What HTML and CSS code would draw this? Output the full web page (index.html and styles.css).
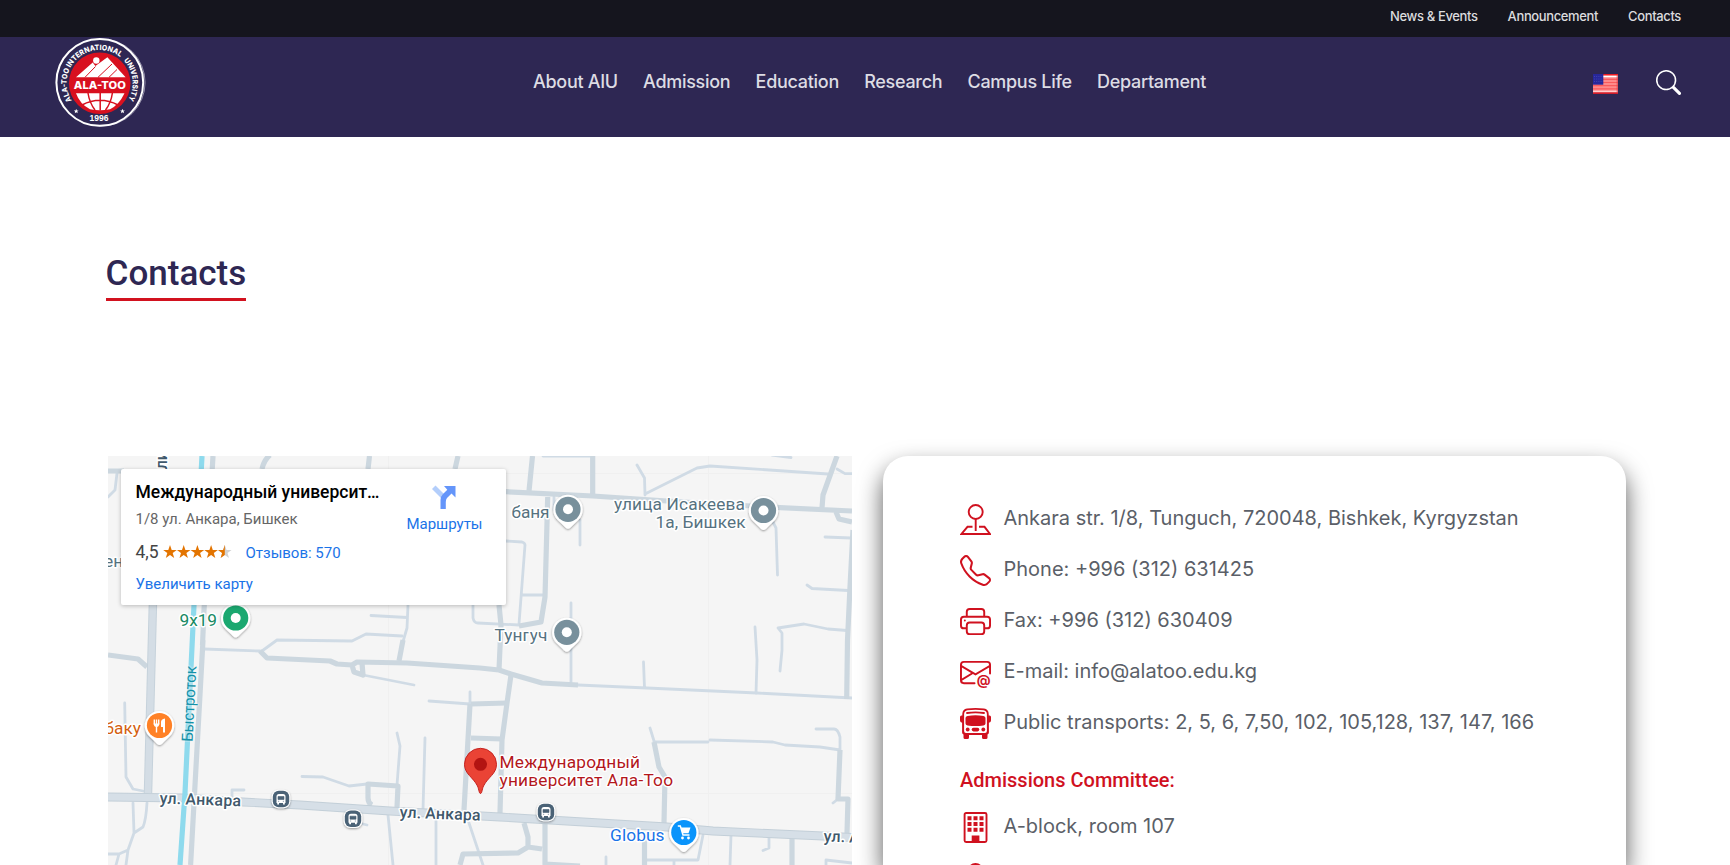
FILE: index.html
```html
<!DOCTYPE html>
<html lang="en">
<head>
<meta charset="utf-8">
<title>Contacts</title>
<link rel="stylesheet" href="styles.css">
</head>
<body>
<div class="topbar">
  <a class="top-news">News &amp; Events</a>
  <a class="top-ann">Announcement</a>
  <a class="top-con">Contacts</a>
</div>
<header class="header">
  <svg class="logo" viewBox="54 37 94 92">
    <defs>
      <path id="arcLeft" d="M71.700 100.500A33 33 0 0 1 120.500 57.400"/>
      <path id="arcRight" d="M123.800 60.500A33 33 0 0 1 127.700 100.500"/>
    </defs>
    <circle cx="101.500" cy="82.500" r="43.600" class="ring-ghost"/>
    <circle cx="99.800" cy="82.400" r="43.400" class="ring"/>
    <circle cx="99.700" cy="83.200" r="30.800" fill="#d8101f"/>
    <circle cx="96.300" cy="60.500" r="3.200" fill="#fff"/>
    <path d="M76 77.300L92.700 62.600L95.400 66L107.400 57.300L125.600 77.300Z" fill="#fff"/>
    <path d="M85 77.300L95.500 66.500M98 77.300L112 64M109 77.300L117 69.500" stroke="#d8101f" stroke-width="1" fill="none"/>
    <text x="73.800" y="89" class="logo-name" textLength="52" lengthAdjust="spacingAndGlyphs">ALA-TOO</text>
    <path d="M76 93.300H124.500Q119 105 110 109.200Q100 111.500 90 109.200Q80 104.500 76 93.300Z" fill="#fff"/>
    <path d="M100.200 93V110.500M88 93Q89.500 103 95 110M112.400 93Q111 103 105.500 110M82 105Q100 95.500 118 105" stroke="#d8101f" stroke-width="1.500" fill="none"/>
    <text class="logo-arc"><textPath href="#arcLeft" textLength="92" lengthAdjust="spacingAndGlyphs">ALA-TOO INTERNATIONAL</textPath></text>
    <text class="logo-arc"><textPath href="#arcRight" textLength="42" lengthAdjust="spacingAndGlyphs">UNIVERSITY</textPath></text>
    <text x="89.500" y="121.300" class="logo-year" textLength="19" lengthAdjust="spacingAndGlyphs">1996</text>
    <path d="M76.200 108.800l.7 1.600 1.700.1-1.300 1.100.4 1.600-1.500-.9-1.400.9.3-1.600-1.300-1.100 1.700-.1zM122.500 108.800l.7 1.600 1.700.1-1.300 1.100.4 1.600-1.500-.9-1.400.9.3-1.600-1.300-1.100 1.700-.1z" fill="#fff"/>
  </svg>
  <nav class="nav">
    <a>About AIU</a><a>Admission</a><a>Education</a><a>Research</a><a>Campus Life</a><a>Departament</a>
  </nav>
  <div class="tools">
    <svg class="flag" viewBox="0 0 25 20">
      <rect width="25" height="20" fill="#ff8a8a"/>
      <path d="M0 .7H25" stroke="#ee1c22" stroke-width="1.500"/>
      <path d="M0 2.500H25" stroke="#fff" stroke-width="1.500"/>
      <path d="M0 5.300H25M0 8.500H25M0 11.700H25M0 14.800H25" stroke="#fb5a5c" stroke-width="1.200"/>
      <path d="M0 17.300H25" stroke="#ffd9d9" stroke-width="1.200"/>
      <path d="M0 19.200H25" stroke="#cf1d2b" stroke-width="1.600"/>
      <path d="M24.300 1V19" stroke="#d73a48" stroke-opacity=".6" stroke-width="1.400"/>
      <rect width="10.300" height="10.700" fill="#27279b"/>
      <path d="M1 2.500H10M1 5H10M1 7.500H10" stroke="#4a4ab4" stroke-width=".8" stroke-dasharray="1 1.200"/>
    </svg>
    <svg class="search" viewBox="0 0 16 16" fill="#fff"><path d="M11.742 10.344a6.500 6.500 0 1 0-1.397 1.398h-.001q.044.06.098.115l3.850 3.850a1 1 0 0 0 1.415-1.414l-3.850-3.850a1 1 0 0 0-.115-.1zM12 6.500a5.500 5.500 0 1 1-11 0 5.500 5.500 0 0 1 11 0"/></svg>
  </div>
</header>
<main class="main">
  <h1 class="title">Contacts</h1>
  <div class="columns">
    <section class="map">
      <svg class="map-canvas" viewBox="108 456 744 409">
        <defs>
          <filter id="sh" x="-30%" y="-30%" width="160%" height="170%"><feDropShadow dx="0" dy="1" stdDeviation="1.200" flood-opacity=".4"/></filter>
          <g id="pin">
            <path d="M0 19.500C-1.500 19.500-3 18-4 16.800L-10.500 10.500A14.700 14.700 0 1 1 10.500 10.500L4 16.800C3 18 1.500 19.500 0 19.500Z" fill="#fff" filter="url(#sh)"/>
            <circle r="12.600"/>
          </g>
          <g id="bus">
            <rect x="-9.300" y="-9.300" width="18.600" height="18.600" rx="7" fill="#fff" filter="url(#sh)"/>
            <rect x="-8.200" y="-8.200" width="16.400" height="16.400" rx="6" fill="#4a6276"/>
            <path d="M-4.500 4V-2.500Q-4.500-5-2-5H2Q4.500-5 4.500-2.500V4H3.800V5.500H2V4H-2V5.500H-3.800V4Z" fill="#fff"/>
            <path d="M-3-2.500H3V.5H-3ZM-3 2.300H-1.800M1.800 2.300H3" fill="#4a6276" stroke="#4a6276" stroke-width=".6"/>
          </g>
        </defs>
        <rect x="108" y="456" width="744" height="409" fill="#f5f5f5"/>
        <path d="M388.500 456V865M708.500 456V865M108 473.500H852M108 793.500H852" stroke="#f0f0f0" fill="none"/>
        <g class="road-thin">
          <path d="M117 473L115 490L108 497"/>
          <path d="M637 465L644.500 478L645 495M645 494L697 468L710 466L828 474M837 469L845 473.600H852M772 455L791 457.500M543 456H593"/>
          <path d="M825 537L851 538M807 585L812 588.500L848 590.500M755 627L757 660L756 693"/>
          <path d="M847 630.500L828 629L804 624L778 628L782 633L782 650L780 671"/>
          <path d="M519 624L525 545Q525 543 522 542L506 541M523 595H543M580 520V545M554 497V510M773 522L776 528L777.500 575M571 603V682"/>
          <path d="M473 605V618Q474 623 478 623L519 625M408 605L407 628L402 645M371 615.500L407 617.500"/>
          <path d="M262 651L277 640L352 641L366 634L402 636M204 649L260 651M363 675L414 685"/>
          <path d="M124.700 703L126 777L133 789L143 791M133 803L134 833L128 850L126 865M147 803Q146 820 143 827L134 833M108 854H119L128 850M119 854L116 865"/>
          <path d="M232 797V790H244M302 776.500L323 777L349 786L367 784M397 785L400 746L397 733M425 738L423 810M429 701L470 704V692M363 824L367 825"/>
          <path d="M578 685L647 688L757 693L852 698M643.500 662L644.500 688M650 728L654 741"/>
          <path d="M654 742H708M710 740L773 742L785 745L820 747L840 750V737Q838 729 834 729H816M833 803L838 799"/>
          <path d="M647 860H698L703 835M674 861V865M731 835L730 865M769 837V848L763 850.500M826 865V860L852 863M606 857V865M388 815L393 865M436 820V865M468 820L483 865"/>
        </g>
        <g class="road">
          <path d="M108 471H124M262 469Q264 460 270 455M369.500 456L368 469M458 456L455 469M532.500 456L529 491M592.700 456V495"/>
          <path d="M506 491.700L593 496L667 501L780 507.700L852 511M837 456L823 495L822 508M836 512L839 519L852 522"/>
          <path d="M853 530L850 587L847.500 640L846.700 699"/>
          <path d="M547.700 497L545 597L541 622L519 626M499 605L501 625L499 670M403 640L399 661"/>
          <path d="M260 651L267 658L330 661L337 664L352 665L357 662L407 663L480 668L499 670L511 674L542 683L578 685M352 665L354 672L363 675L362 663"/>
          <path d="M108 655L138 659L147 667"/>
          <path d="M372 805Q368 803 368 798V784L398 786L397 807M470 704L464 810M471 704L507 703M471 738L502 739"/>
          <path d="M511 675L507 703L502 740L500 813M654 742L659 767L665 777L664 823M840 750L838 799H848L847 833"/>
          <path d="M524 823L528 837V847L542 849M528 847L518 853L463 854L460 865M545 823V864L580 866M644.500 840V865M792 839V865M203 640L190.600 865M213 456L204 610L202.500 645"/>
        </g>
        <path d="M153 600L148 793" stroke="#c6d2db" stroke-width="8.500" fill="none"/>
        <path d="M153 600L148 793" stroke="#d4dde5" stroke-width="6.500" fill="none"/>
        <path d="M108 797L183 798L243 802L300 805L390 811L500 817L667 827L713 831L823 836L852 837.500" stroke="#c3cfd8" stroke-width="8.800" fill="none"/>
        <path d="M108 797L183 798L243 802L300 805L390 811L500 817L667 827L713 831L823 836L852 837.500" stroke="#d6dfe7" stroke-width="7" fill="none"/>
        <path d="M202 456L194 605L185 793L180 865" stroke="#8edaed" stroke-width="5.200" fill="none"/>

        <g class="poi">
          <text x="511.500" y="517.500" textLength="38" class="slate">баня</text>
          <text x="614" y="510" textLength="131" class="slate">улица Исакеева</text>
          <text x="655.500" y="527.700" textLength="90" class="slate">1а, Бишкек</text>
          <text x="494.500" y="640.700" textLength="53" class="slate">Тунгуч</text>
          <text x="104" y="566.500" class="slate">ен</text>
          <text x="179.500" y="625.700" textLength="37.500" fill="#198a64">9x19</text>
          <text x="104.500" y="734" textLength="36.500" fill="#d45f10">баку</text>
          <text x="499.500" y="768" textLength="140.500" fill="#b3171c">Международный</text>
          <text x="499.500" y="785.700" textLength="173.500" fill="#b3171c">университет Ала-Тоо</text>
          <text x="610" y="840.500" textLength="54.500" fill="#1a73e8">Globus</text>
          <text class="water" transform="translate(192.500 742) rotate(-87)" textLength="76">Быстроток</text>
          <g class="street">
            <text transform="translate(159.500 803.500) rotate(2)" textLength="81.500">ул. Анкара</text>
            <text transform="translate(399.500 817.500) rotate(2.200)" textLength="81">ул. Анкара</text>
            <text transform="translate(823.500 841.500) rotate(2)" textLength="81">ул. Анкара</text>
            <text transform="translate(166.500 478.500) rotate(-90)">или</text>
          </g>
        </g>

        <use href="#pin" x="568" y="509.300" fill="#78909c"/><circle cx="568" cy="509.300" r="5" fill="#fff"/>
        <use href="#pin" x="763.500" y="510.500" fill="#78909c"/><circle cx="763.500" cy="510.500" r="5" fill="#fff"/>
        <use href="#pin" x="566.800" y="632.300" fill="#78909c"/><circle cx="566.800" cy="632.300" r="5" fill="#fff"/>
        <use href="#pin" x="235.700" y="618" fill="#1ba870"/><circle cx="235.700" cy="618" r="5" fill="#fff"/>
        <use href="#pin" x="159.500" y="725.500" fill="#ff8126"/>
        <path d="M154.300 719.500V724.500M156.500 719.500V724.500M158.700 719.500V724.500M156.500 724V732.500" stroke="#fff" stroke-width="1.400"/>
        <path d="M153.600 723.500H159.400Q159 727 156.500 727Q154 727 153.600 723.500ZM161 727V722Q161 719 165 718.500V732.500H163V727Z" fill="#fff"/>
        <use href="#pin" x="683.800" y="832.500" fill="#0a94fb"/>
        <path d="M677.800 826H680.300L683 835H689.500" fill="none" stroke="#fff" stroke-width="1.500"/>
        <path d="M680.800 827.500H690.500L688.500 833.200H682.300Z" fill="#fff"/>
        <circle cx="682.500" cy="838" r="1.400" fill="#fff"/><circle cx="688.500" cy="838" r="1.400" fill="#fff"/>
        <use href="#bus" x="281" y="799"/><use href="#bus" x="353" y="818.700"/><use href="#bus" x="546" y="812"/>
        <path d="M480.500 793.500C479 793.500 479.200 790 477.500 786C473 777 464.500 774 464.500 764.300A16 16 0 0 1 496.500 764.300C496.500 774 488 777 483.500 786C481.800 790 482 793.500 480.500 793.500Z" fill="#ea4335" stroke="#c5221f"/>
        <circle cx="480.500" cy="764.300" r="6.500" fill="#b31412"/>
      </svg>
      <div class="place">
        <div class="place-info">
          <div class="place-name">Международный университ…</div>
          <div class="place-addr">1/8 ул. Анкара, Бишкек</div>
          <div class="rating"><span class="score">4,5</span>
            <svg class="stars" viewBox="0 0 69 14">
              <defs><path id="st" d="M7 0L8.700 5H13.800L9.700 8.100L11.200 13L7 10L2.800 13L4.300 8.100L.2 5H5.300Z"/><clipPath id="half"><rect width="7" height="14"/></clipPath></defs>
              <g fill="#e37400"><use href="#st"/><use href="#st" x="13.700"/><use href="#st" x="27.400"/><use href="#st" x="41.100"/></g>
              <g transform="translate(54.800)"><use href="#st" fill="#d2d2d2"/><use href="#st" fill="#e37400" clip-path="url(#half)"/></g>
            </svg>
            <a class="reviews">Отзывов: 570</a></div>
          <a class="enlarge">Увеличить карту</a>
        </div>
        <div class="directions">
          <svg class="dir-icon" viewBox="0 0 24 24"><path d="M0 4L3.500 .5L12 9L9.500 13.500Z" fill="#b3cefb"/><path d="M8.500 24V15Q8.500 11.500 11 9L15.300 4.800L12 1H23.500V12.500L19.500 8.500L15 13Q13.800 14.500 13.800 17V24Z" fill="#6495fa"/></svg>
          <a>Маршруты</a>
        </div>
      </div>
    </section>
    <section class="card">
      <div class="row">
        <svg class="ico" viewBox="0 0 31 31"><g fill="none" stroke="#d0111f" stroke-width="1.900"><circle cx="15.700" cy="8" r="7"/><path d="M15.700 15V27M12.500 22.800H7.500L1.500 30H30L24.500 22.800H19"/></g></svg>
        <span>Ankara str. 1/8, Tunguch, 720048, Bishkek, Kyrgyzstan</span>
      </div>
      <div class="row">
        <svg class="ico" viewBox="0 0 16 16"><path d="M3.654 1.328a.678.678 0 0 0-1.015-.063L1.605 2.300c-.483.484-.661 1.169-.45 1.770a17.600 17.600 0 0 0 4.168 6.608 17.600 17.600 0 0 0 6.608 4.168c.601.211 1.286.033 1.770-.45l1.034-1.034a.678.678 0 0 0-.063-1.015l-2.307-1.794a.68.68 0 0 0-.58-.122l-2.190.547a1.750 1.750 0 0 1-1.657-.459L5.482 8.062a1.750 1.750 0 0 1-.46-1.657l.548-2.190a.68.68 0 0 0-.122-.58zM1.884.511a1.745 1.745 0 0 1 2.612.163L6.290 2.980c.329.423.445.974.315 1.494l-.547 2.190a.68.68 0 0 0 .178.643l2.457 2.457a.68.68 0 0 0 .644.178l2.189-.547a1.750 1.750 0 0 1 1.494.315l2.306 1.794c.829.645.905 1.870.163 2.611l-1.034 1.034c-.74.74-1.846 1.065-2.877.702a18.600 18.600 0 0 1-7.010-4.420 18.600 18.600 0 0 1-4.420-7.009c-.362-1.030-.037-2.137.703-2.877z"/></svg>
        <span>Phone: +996 (312) 631425</span>
      </div>
      <div class="row">
        <svg class="ico" viewBox="0 0 16 16"><path d="M2.500 8a.5.5 0 1 0 0-1 .5.5 0 0 0 0 1"/><path d="M5 1a2 2 0 0 0-2 2v2H2a2 2 0 0 0-2 2v3a2 2 0 0 0 2 2h1v1a2 2 0 0 0 2 2h6a2 2 0 0 0 2-2v-1h1a2 2 0 0 0 2-2V7a2 2 0 0 0-2-2h-1V3a2 2 0 0 0-2-2zM4 3a1 1 0 0 1 1-1h6a1 1 0 0 1 1 1v2H4zm1 5a2 2 0 0 0-2 2v1H2a1 1 0 0 1-1-1V7a1 1 0 0 1 1-1h12a1 1 0 0 1 1 1v3a1 1 0 0 1-1 1h-1v-1a2 2 0 0 0-2-2zm7 2v3a1 1 0 0 1-1 1H5a1 1 0 0 1-1-1v-3a1 1 0 0 1 1-1h6a1 1 0 0 1 1 1"/></svg>
        <span>Fax: +996 (312) 630409</span>
      </div>
      <div class="row">
        <svg class="ico" viewBox="0 0 16 16"><path d="M2 2a2 2 0 0 0-2 2v8.010A2 2 0 0 0 2 14h5.500a.5.5 0 0 0 0-1H2a1 1 0 0 1-.966-.741l5.640-3.471L8 9.583l7-4.200V8.500a.5.5 0 0 0 1 0V4a2 2 0 0 0-2-2zm3.708 6.208L1 11.105V5.383zM1 4.217V4a1 1 0 0 1 1-1h12a1 1 0 0 1 1 1v.217l-7 4.200z"/><text x="8.700" y="14.600" class="at">@</text></svg>
        <span>E-mail: info@alatoo.edu.kg</span>
      </div>
      <div class="row">
        <svg class="ico" viewBox="0 0 31 31"><path fill-rule="evenodd" d="M7 .6Q15.500-.6 24 .6Q28.500 1.300 28.700 6V7.500H29.500Q31 7.500 31 9V12.500Q31 14.500 28.900 14.800V24.500Q28.900 26 27.500 26.500V29.500Q27.500 31 26 31H23.500Q22 31 22 29.500V27H9V29.500Q9 31 7.500 31H5Q3.500 31 3.500 29.500V26.500Q2.100 26 2.100 24.500V14.800Q0 14.500 0 12.500V9Q0 7.500 1.500 7.500H2.300V6Q2.500 1.300 7 .6ZM7.500 2.300Q4.300 2.700 4.100 6V23Q4.100 25 6 25H25Q26.900 25 26.900 23V6Q26.700 2.700 23.500 2.300Q15.500 1.200 7.500 2.300Z"/><path d="M7 5Q15.500 3.800 24 5" stroke="#d0111f" stroke-width="1.800" stroke-linecap="round" fill="none"/><path d="M7.500 8Q15.500 6.500 23.500 8Q25.500 8.300 25.500 10V15.500Q25.500 17.200 23.500 17.500Q15.500 18.500 7.500 17.500Q5.500 17.200 5.500 15.500V10Q5.500 8.300 7.500 8Z"/><circle cx="7.700" cy="21.500" r="1.900"/><circle cx="23.300" cy="21.500" r="1.900"/><rect x="11.700" y="19.800" width="7.600" height="3.600" rx="1.800"/></svg>
        <span>Public transports: 2, 5, 6, 7,50, 102, 105,128, 137, 147, 166</span>
      </div>
      <h2 class="sub">Admissions Committee:</h2>
      <div class="row">
        <svg class="ico" viewBox="0 0 31 31"><rect x="4.600" y="1" width="21.900" height="29" rx="1.500" fill="none" stroke="#d0111f" stroke-width="1.900"/><path d="M7.500 4.300h4v4h-4zM13.500 4.300h4v4h-4zM19.500 4.300h4v4h-4zM7.500 10h4v4h-4zM13.500 10h4v4h-4zM19.500 10h4v4h-4zM7.500 15.700h4v4h-4zM13.500 15.700h4v4h-4zM19.500 15.700h4v4h-4zM11.700 23.500h7.700V30h-7.700z"/></svg>
        <span>A-block, room 107</span>
      </div>
      <div class="row">
        <svg class="ico" viewBox="0 0 31 31"><g fill="none" stroke="#d0111f" stroke-width="2"><circle cx="15.500" cy="8" r="7"/><path d="M2 30Q3 19 15.500 19T29 30Z"/></g></svg>
      </div>
    </section>
  </div>
</main>
</body>
</html>
```
FILE: styles.css
```css
* { box-sizing: border-box; }
html, body { margin: 0; height: 865px; overflow: hidden; background: #fff; }
body { font-family: Inter, "Liberation Sans", sans-serif; }

.topbar {
  height: 37px;
  background: #15151e;
  display: flex;
  justify-content: flex-end;
  gap: 30px;
  padding: 0 49px 0 0;
  font-size: 13px;
  line-height: 33px;
  letter-spacing: -.37px;
  font-weight: 500;
  color: #dcdcde;
}

.header {
  height: 100px;
  background: #2e2753;
  display: grid;
  grid-template-columns: 533px 1fr auto;
  padding-right: 49px;
}
.logo { width: 94px; height: 92px; margin-left: 54px; }
.ring { fill: #2e2753; stroke: #fff; stroke-width: 2; }
.ring-ghost { fill: none; stroke: #a9a6bd; stroke-width: .8; }
.logo-name { font: 800 10.5px Inter, sans-serif; fill: #fff; }
.logo-arc { font: 800 7.4px Inter, sans-serif; fill: #fff; }
.logo-year { font: 700 8.3px "Liberation Sans", sans-serif; fill: #fff; }

.nav {
  display: flex;
  gap: 25.2px;
  padding-top: 30px;
  font-size: 18px;
  line-height: 30px;
  letter-spacing: -.29px;
  font-weight: 500;
  color: #dddce4;
  white-space: nowrap;
}
.tools { display: flex; align-items: flex-start; gap: 38px; }
.flag { width: 25px; height: 20px; margin-top: 37px; }
.search { width: 25px; height: 25px; margin-top: 33px; }

.main { padding: 111px 104px 0 105px; }
.title {
  display: block;
  width: fit-content;
  margin: 0 0 0 .6px;
  height: 53px;
  border-bottom: 3px solid #d2121f;
  font: 500 35px/52px Roboto, sans-serif;
  color: #2e2753;
}
.columns {
  display: grid;
  grid-template-columns: 744px 743px;
  gap: 31px;
  margin: 155px 0 0 3px;
}

.map { position: relative; height: 409px; overflow: hidden; }
.map-canvas { display: block; width: 744px; height: 409px; }
.road-thin path { fill: none; stroke: #d0dbe5; stroke-width: 2.8; stroke-linecap: round; stroke-linejoin: round; }
.road path { fill: none; stroke: #ccd7df; stroke-width: 5.2; stroke-linejoin: round; }
.poi text {
  font-family: Roboto, sans-serif;
  font-size: 17.3px;
  paint-order: stroke;
  stroke: #fff;
  stroke-width: 3px;
  stroke-linejoin: round;
}
.poi .slate { fill: #567280; }
.poi .water { font-size: 15.5px; fill: #1591a8; stroke: #f5f5f5; stroke-opacity: .3; }
.poi .street text { font-size: 16px; font-weight: 500; fill: #40586b; }

.place {
  position: absolute;
  left: 13px;
  top: 13px;
  width: 385px;
  height: 136px;
  background: #fff;
  border-radius: 2px;
  box-shadow: 0 1px 4px rgba(0, 0, 0, .25);
  display: flex;
  justify-content: space-between;
  padding: 13px 23.5px 0 14.5px;
  font: 15px/20px Roboto, sans-serif;
  white-space: nowrap;
}
.place a { color: #1a73e8; }
.place-name { font-size: 17.5px; line-height: 21px; font-weight: 500; color: #000; }
.place-addr { margin-top: 6px; color: #666; }
.rating { display: flex; align-items: center; margin-top: 13px; height: 20px; }
.score { font-size: 17.5px; font-weight: 400; color: #444; width: 27px; }
.stars { width: 69px; height: 14px; margin: 0 14px 0 0; }
.reviews { padding-top: 2px; }
.enlarge { display: block; margin-top: 12px; }
.directions { display: flex; flex-direction: column; align-items: center; padding-top: 3px; }
.dir-icon { width: 24px; height: 24px; margin-bottom: 5px; }

.card {
  height: 409px;
  border-radius: 25px 25px 0 0;
  background: #fff;
  box-shadow: 0 12px 24px rgba(0, 0, 0, .65);
  padding: 36px 0 0 77px;
  color: #5b5f68;
}
.row {
  display: flex;
  align-items: center;
  gap: 12.5px;
  height: 51px;
  font-size: 20px;
  line-height: 24px;
  white-space: nowrap;
}
.ico { width: 31px; height: 31px; fill: #d0111f; flex: none; margin-top: 3.5px; }
.at { font: 700 7px Inter, sans-serif; fill: #d0111f; }
.sub { margin: 20px 0 7px; font: 500 20px/26px Roboto, sans-serif; color: #d0111f; }
```
